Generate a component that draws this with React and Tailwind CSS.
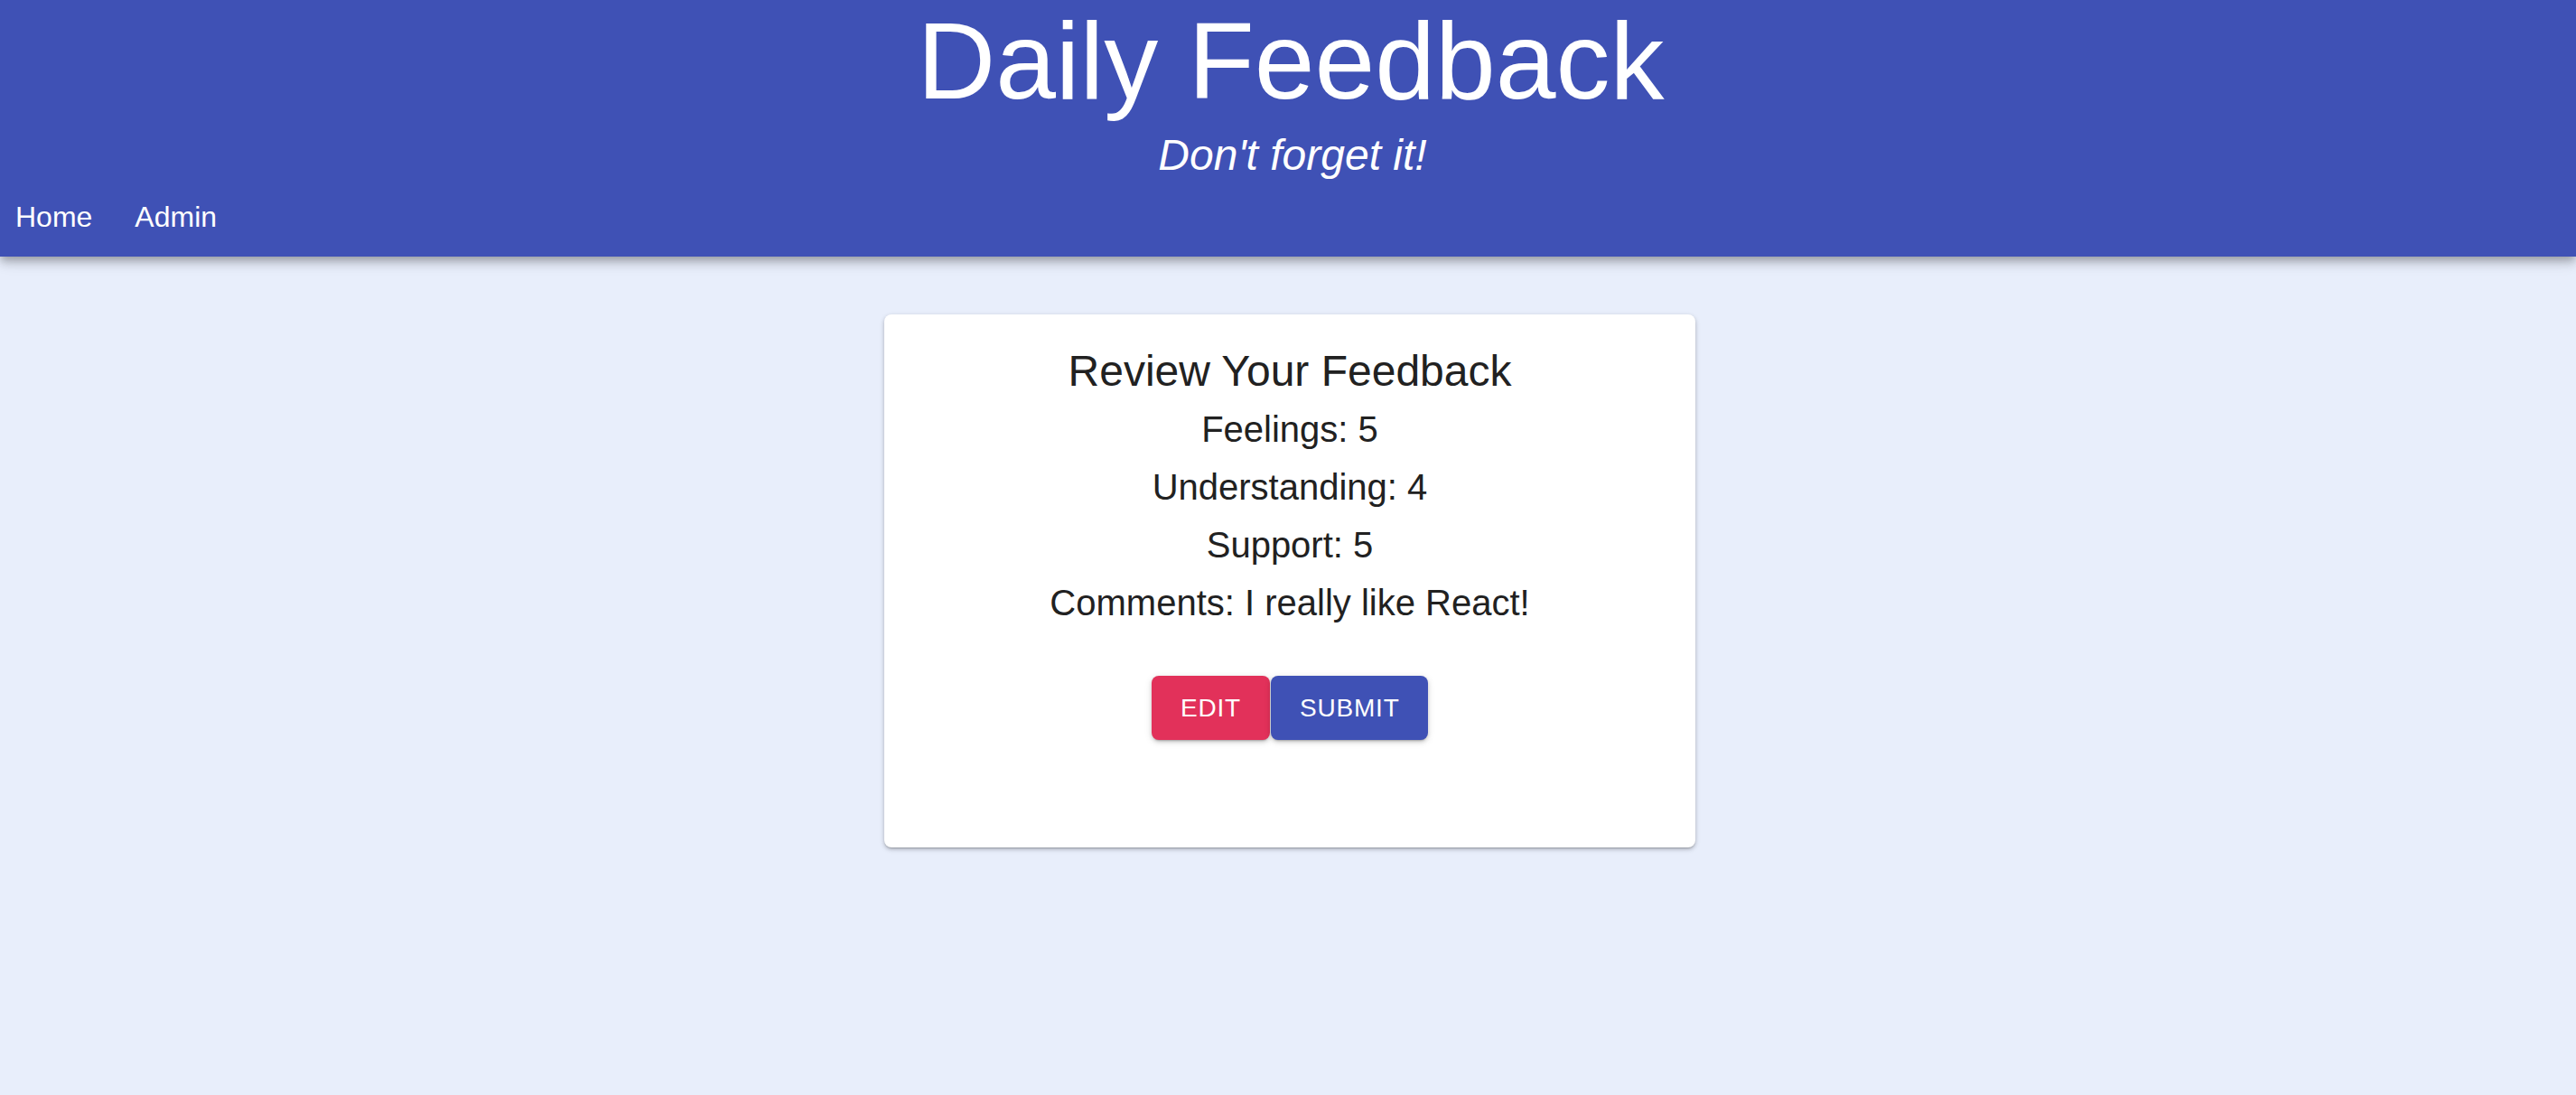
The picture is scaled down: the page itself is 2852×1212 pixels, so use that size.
import React from 'react';

const feedback = {
  feelings: 5,
  understanding: 4,
  support: 5,
  comments: 'I really like React!',
};

function Header() {
  return (
    <header className="bg-[#3f51b5] text-white text-center pb-[20px] shadow-[0_4px_8px_-2px_rgba(0,0,0,0.2),0_8px_10px_0_rgba(0,0,0,0.14),0_2px_20px_0_rgba(0,0,0,0.12)] relative z-10">
      <h1 className="pl-[6px] text-[120px] leading-[134px] font-light">Daily Feedback</h1>
      <p className="mt-[10px] pl-[10px] text-[48px] leading-[56px] italic">Don't forget it!</p>
      <nav className="mt-[16px] flex gap-[47px] pl-[17px] text-[32px] leading-[48px]">
        <a href="#/">Home</a>
        <a href="#/admin">Admin</a>
      </nav>
    </header>
  );
}

function Review() {
  return (
    <div className="ml-[calc(50%-447px)] mt-[64px] w-[898px] bg-white rounded-[8px] pt-[31px] pb-[119px] text-center text-[#212121] shadow-[0_2px_2px_-1px_rgba(0,0,0,0.2),0_2px_4px_0_rgba(0,0,0,0.14),0_2px_6px_0_rgba(0,0,0,0.12)]">
      <h2 className="text-[48px] leading-[64px]">Review Your Feedback</h2>
      <p className="text-[40px] leading-[64px]">Feelings: {feedback.feelings}</p>
      <p className="text-[40px] leading-[64px]">Understanding: {feedback.understanding}</p>
      <p className="text-[40px] leading-[64px]">Support: {feedback.support}</p>
      <p className="text-[40px] leading-[64px]">Comments: {feedback.comments}</p>

      <div className="mt-[49px] flex justify-center gap-[1px]">
        <button className="h-[71px] min-w-[129px] px-[32px] rounded-[8px] bg-[#e2315a] text-white text-[28px] tracking-[0.8px] uppercase shadow-[0_3px_2px_-2px_rgba(0,0,0,0.2),0_2px_4px_0_rgba(0,0,0,0.14),0_2px_8px_0_rgba(0,0,0,0.12)]">
          Edit
        </button>
        <button className="h-[71px] w-[174px] px-[32px] rounded-[8px] bg-[#3f51b5] text-white text-[28px] tracking-[0.8px] uppercase shadow-[0_3px_2px_-2px_rgba(0,0,0,0.2),0_2px_4px_0_rgba(0,0,0,0.14),0_2px_8px_0_rgba(0,0,0,0.12)]">
          Submit
        </button>
      </div>
    </div>
  );
}

export default function App() {
  return (
    <div className="min-h-screen bg-[#e8eefb] font-['Liberation_Sans',Arial,sans-serif]">
      <Header />
      <Review />
    </div>
  );
}
